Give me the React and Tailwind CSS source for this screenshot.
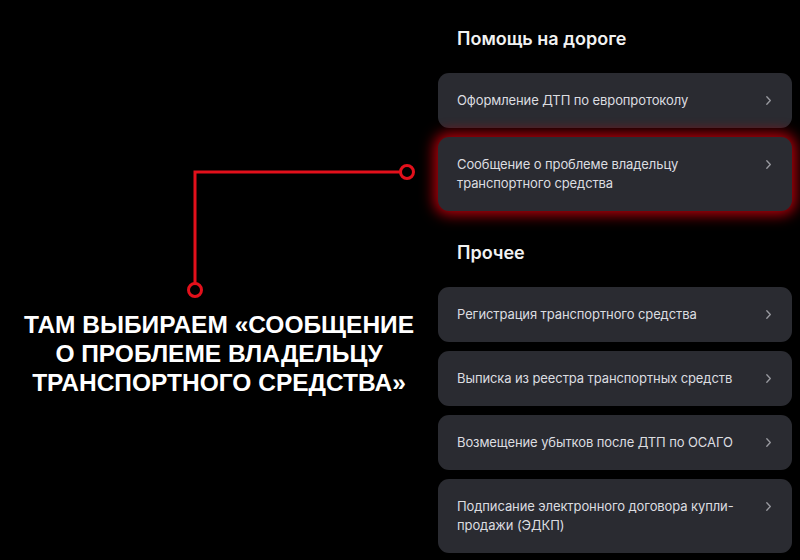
import React from 'react';

const groups = [
  {
    title: 'Помощь на дороге',
    items: [
      { text: 'Оформление ДТП по европротоколу' },
      { text: ['Сообщение о проблеме владельцу', 'транспортного средства'], glow: true },
    ],
  },
  {
    title: 'Прочее',
    items: [
      { text: 'Регистрация транспортного средства' },
      { text: 'Выписка из реестра транспортных средств' },
      { text: 'Возмещение убытков после ДТП по ОСАГО' },
      { text: ['Подписание электронного договора купли-', 'продажи (ЭДКП)'] },
    ],
  },
];

function Chevron() {
  return (
    <svg width="7" height="11" viewBox="0 0 7 11" className="mt-[4px] shrink-0">
      <path d="M1.8 1.8 L5.3 5.5 L1.8 9.2" fill="none" stroke="#9a9ba1" strokeWidth="1.3" strokeLinecap="round" strokeLinejoin="round" />
    </svg>
  );
}

function Card({ item }) {
  const lines = Array.isArray(item.text) ? item.text : [item.text];
  return (
    <div
      className={
        'flex items-start justify-between rounded-[11px] bg-[#2a2b31] pl-[19px] pr-[20px] py-[18px] ' +
        (item.glow ? 'shadow-[0_0_14px_4px_rgba(200,0,12,0.9)]' : '')
      }
    >
      <div className="text-[13px] leading-[19px] tracking-[-0.1px] text-[#dcdde0]">
        {lines.map((l) => (
          <div key={l}>{l}</div>
        ))}
      </div>
      <Chevron />
    </div>
  );
}

export default function App() {
  return (
    <div
      className="relative flex w-[800px] h-[560px] overflow-hidden bg-black"
      style={{ fontFamily: 'Inter, "Liberation Sans", sans-serif' }}
    >
      {/* выноска */}
      <svg className="absolute left-0 top-0" width="800" height="560">
        <path d="M195 284 V172 H400" fill="none" stroke="#e3101b" strokeWidth="3" />
        <circle cx="407" cy="172" r="6.5" fill="none" stroke="#e3101b" strokeWidth="3" />
        <circle cx="195" cy="290" r="6.5" fill="none" stroke="#e3101b" strokeWidth="3" />
      </svg>

      <div className="w-[438px] pt-[310px]">
        <p
          className="text-center text-[24.5px] leading-[29px] font-bold uppercase text-white"
          style={{ fontFamily: '"Liberation Sans", Arial, sans-serif' }}
        >
          Там выбираем «Сообщение
          <br />о проблеме владельцу
          <br />
          транспортного средства»
        </p>
      </div>

      <div className="w-[354px] pt-[27px]">
        {groups.map((g, gi) => (
          <div key={g.title} className={gi > 0 ? 'mt-[30px]' : ''}>
            <h2 className="pl-[19px] text-[18px] leading-[24px] font-semibold text-[#f2f2f2]">{g.title}</h2>
            <div className="mt-[22px] flex flex-col gap-[9px]">
              {g.items.map((it, i) => (
                <Card key={i} item={it} />
              ))}
            </div>
          </div>
        ))}
      </div>
    </div>
  );
}
